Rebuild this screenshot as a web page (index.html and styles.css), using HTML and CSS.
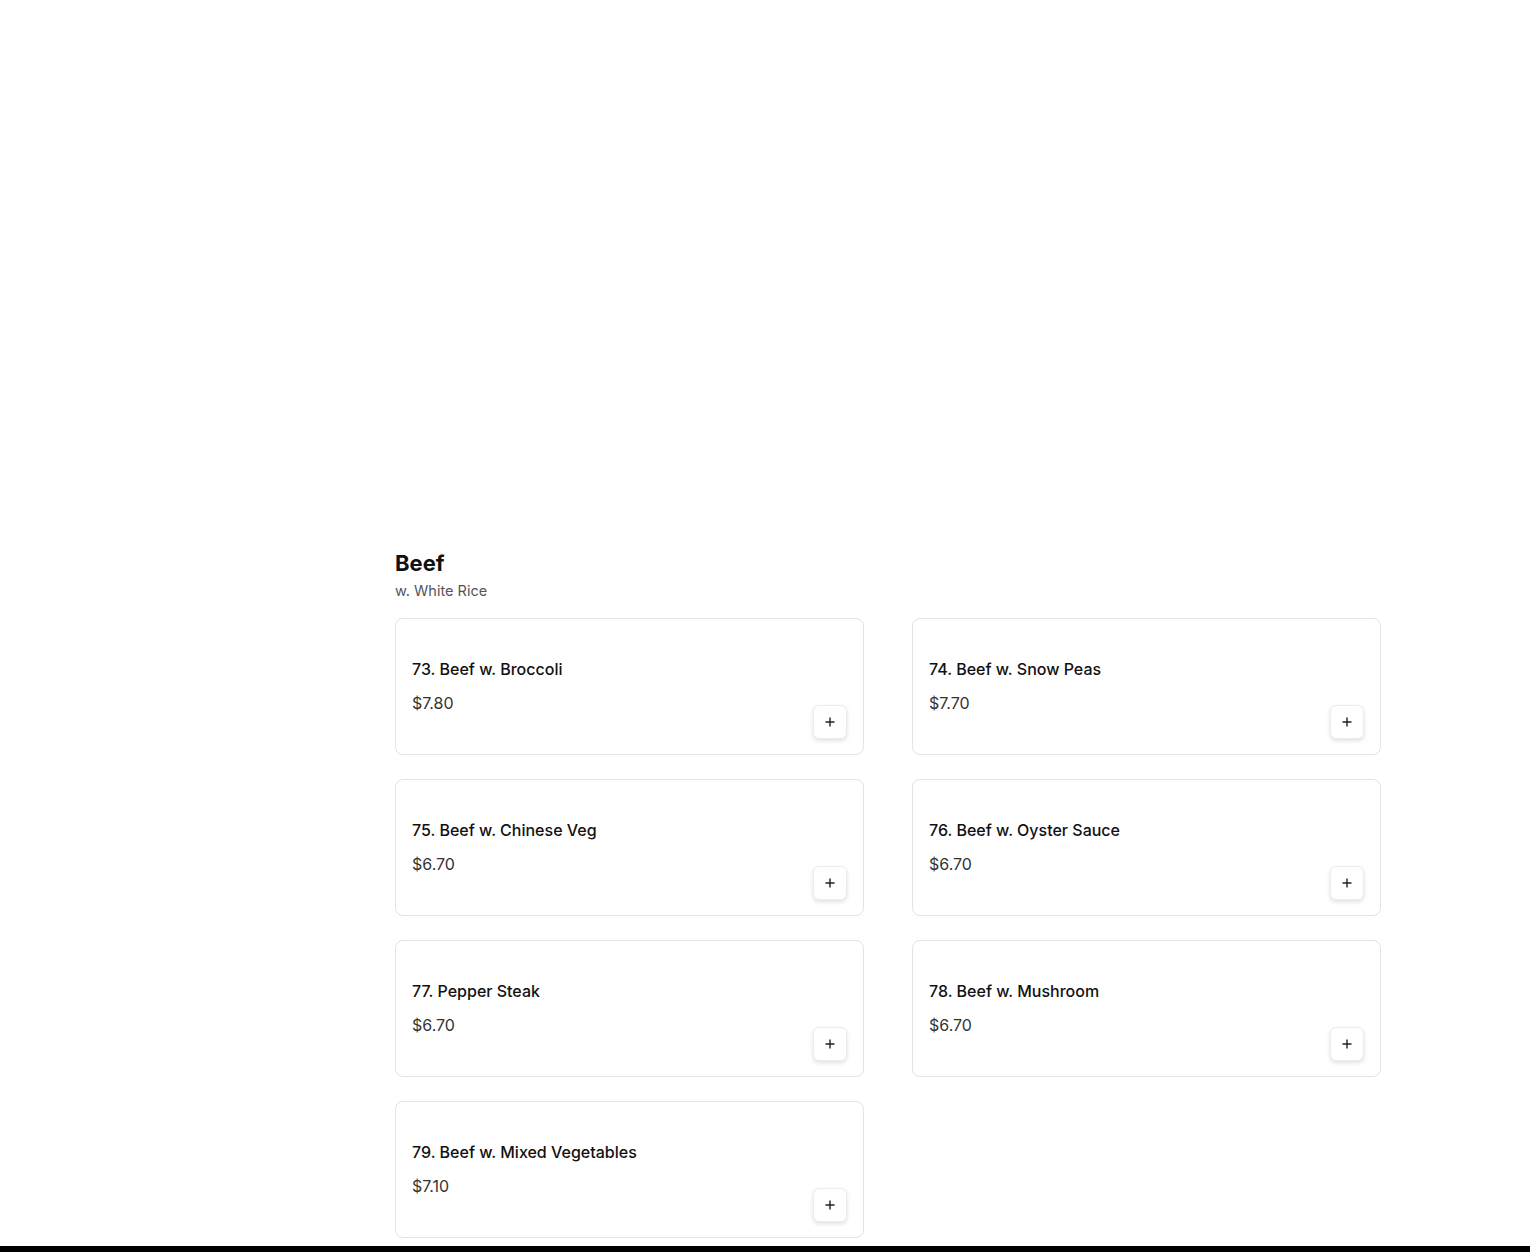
FILE: index.html
```html
<!DOCTYPE html>
<html lang="en">
<head>
<meta charset="utf-8">
<title>Beef</title>
<link rel="stylesheet" href="styles.css">
</head>
<body>
<main class="page">
  <section class="category">
    <h2 class="category-title">Beef</h2>
    <p class="category-sub">w. White Rice</p>
    <div class="grid">
      <div class="card"><div class="info"><div class="name">73. Beef w. Broccoli</div><div class="price">$7.80</div></div><button class="add"><svg viewBox="0 0 12 12" width="12" height="12"><path d="M6 1.5v9M1.5 6h9" stroke="#222" stroke-width="1.4" fill="none"/></svg></button></div>
      <div class="card"><div class="info"><div class="name">74. Beef w. Snow Peas</div><div class="price">$7.70</div></div><button class="add"><svg viewBox="0 0 12 12" width="12" height="12"><path d="M6 1.5v9M1.5 6h9" stroke="#222" stroke-width="1.4" fill="none"/></svg></button></div>
      <div class="card"><div class="info"><div class="name">75. Beef w. Chinese Veg</div><div class="price">$6.70</div></div><button class="add"><svg viewBox="0 0 12 12" width="12" height="12"><path d="M6 1.5v9M1.5 6h9" stroke="#222" stroke-width="1.4" fill="none"/></svg></button></div>
      <div class="card"><div class="info"><div class="name">76. Beef w. Oyster Sauce</div><div class="price">$6.70</div></div><button class="add"><svg viewBox="0 0 12 12" width="12" height="12"><path d="M6 1.5v9M1.5 6h9" stroke="#222" stroke-width="1.4" fill="none"/></svg></button></div>
      <div class="card"><div class="info"><div class="name">77. Pepper Steak</div><div class="price">$6.70</div></div><button class="add"><svg viewBox="0 0 12 12" width="12" height="12"><path d="M6 1.5v9M1.5 6h9" stroke="#222" stroke-width="1.4" fill="none"/></svg></button></div>
      <div class="card"><div class="info"><div class="name">78. Beef w. Mushroom</div><div class="price">$6.70</div></div><button class="add"><svg viewBox="0 0 12 12" width="12" height="12"><path d="M6 1.5v9M1.5 6h9" stroke="#222" stroke-width="1.4" fill="none"/></svg></button></div>
      <div class="card"><div class="info"><div class="name">79. Beef w. Mixed Vegetables</div><div class="price">$7.10</div></div><button class="add"><svg viewBox="0 0 12 12" width="12" height="12"><path d="M6 1.5v9M1.5 6h9" stroke="#222" stroke-width="1.4" fill="none"/></svg></button></div>
    </div>
  </section>
  <div class="bottom-bar"></div>
</main>
</body>
</html>
```
FILE: styles.css
```css
* { box-sizing: border-box; }
html, body { margin: 0; padding: 0; background: #fff; }
body {
  font-family: Inter, "Noto Sans", sans-serif;
  color: #1a1a1a;
}
.page {
  padding-top: 550px;
}
.category {
  width: 986px;
  margin-left: 395px;
}
.category-title {
  margin: 0;
  font-size: 22px;
  line-height: 27px;
  font-weight: 700;
  color: #111;
}
.category-sub {
  margin: 5px 0 0;
  font-size: 14.5px;
  line-height: 18px;
  color: #555;
}
.grid {
  margin-top: 18px;
  display: grid;
  grid-template-columns: 469px 469px;
  column-gap: 48px;
  row-gap: 24px;
}
.card {
  height: 137px;
  border: 1px solid #e3e3e3;
  border-radius: 8px;
  padding: 16px 16px 15px;
  display: flex;
  justify-content: space-between;
  align-items: flex-end;
}
.info {
  align-self: center;
  display: flex;
  flex-direction: column;
  gap: 10px;
  margin-bottom: 2px;
}
.name {
  font-size: 16px;
  line-height: 24px;
  font-weight: 500;
  color: #111;
}
.price {
  font-size: 16px;
  line-height: 24px;
  color: #333;
}
.add {
  width: 34px;
  height: 34px;
  padding: 0;
  border: 1px solid #ececec;
  border-radius: 6px;
  background: #fff;
  box-shadow: 0 2px 4px rgba(0,0,0,0.12);
  display: flex;
  align-items: center;
  justify-content: center;
}
.bottom-bar {
  margin-top: 8px;
  height: 6px;
  background: #000;
}
```
